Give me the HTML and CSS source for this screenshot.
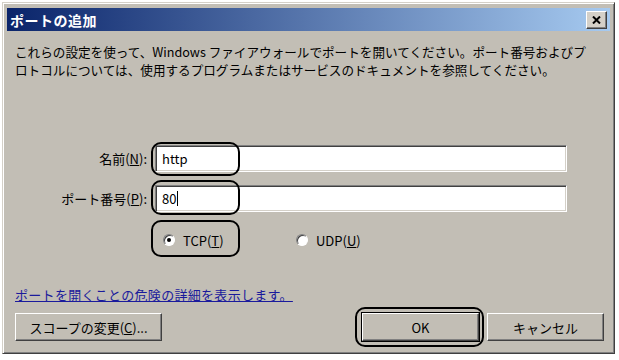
FILE: index.html
```html
<!DOCTYPE html>
<html lang="ja">
<head>
    <meta charset="UTF-8">
    <title>ポートの追加</title>
    <link rel="stylesheet" href="styles.css">
</head>
<body>
    <div class="window">
        <div class="titlebar">
            <span class="title">ポートの追加</span>
            <span class="close">
                <svg width="9" height="8" viewBox="0 0 9 8"><path d="M1 0.5 L8 7.5 M8 0.5 L1 7.5" stroke="#000" stroke-width="2"/></svg>
            </span>
        </div>

        <div class="content">
            <p class="intro">これらの設定を使って、Windows ファイアウォールでポートを開いてください。ポート番号およびプ<br>ロトコルについては、使用するプログラムまたはサービスのドキュメントを参照してください。</p>

            <div class="field first">
                <label>名前(<u>N</u>):</label>
                <div class="input">http</div>
                <span class="mark"></span>
            </div>
            <div class="field second">
                <label>ポート番号(<u>P</u>):</label>
                <div class="input">80<span class="caret"></span></div>
                <span class="mark"></span>
            </div>

            <div class="radios">
                <span class="radio-item tcp"><span class="radio checked"></span><span>TCP(<u>T</u>)</span></span>
                <span class="radio-item"><span class="radio"></span><span>UDP(<u>U</u>)</span></span>
                <span class="mark"></span>
            </div>

            <a class="link" href="#">ポートを開くことの危険の詳細を表示します。</a>

            <div class="buttons">
                <span class="btn scope"><span>スコープの変更(<u>C</u>)...</span></span>
                <span class="spacer"></span>
                <span class="btn ok">OK<span class="mark"></span></span>
                <span class="btn">キャンセル</span>
            </div>
        </div>
    </div>
</body>
</html>
```

FILE: styles.css
```css
body {
    margin: 0;
    background: #fff;
    font-family: "Noto Sans CJK JP", "DejaVu Sans", sans-serif;
    font-size: 13px;
    color: #000;
}
.window {
    margin: 2px;
    width: 613px;
    height: 352px;
    box-sizing: border-box;
    background: #c2beb5;
    border: 1px solid;
    border-color: #d4d0c8 #404040 #404040 #d4d0c8;
    box-shadow: inset 1px 1px #fff, inset -1px -1px #808080;
    padding: 5px 4px 4px 4px;
}
.titlebar {
    height: 23px;
    display: flex;
    align-items: center;
    justify-content: space-between;
    background: linear-gradient(to right, #0a246a, #a6caf0);
    padding: 0 3px;
}
.title {
    color: #fff;
    font-weight: bold;
    font-size: 14px;
    letter-spacing: 0.5px;
}
.close {
    width: 21px;
    height: 18px;
    box-sizing: border-box;
    background: #d4d0c8;
    border: 1px solid;
    border-color: #fff #404040 #404040 #fff;
    box-shadow: inset -1px -1px #808080;
    display: flex;
    align-items: center;
    justify-content: center;
}
.content {
    padding: 0 6px 0 8px;
}
.intro {
    margin: 12px 0 0 0;
    line-height: 18px;
    white-space: nowrap;
    font-size: 12.6px;
}
.field {
    position: relative;
    display: flex;
    align-items: center;
    gap: 8px;
    height: 27px;
}
.field.first {
    margin-top: 66px;
}
.field.second {
    margin-top: 13px;
}
.field label {
    width: 132px;
    text-align: right;
}
.input {
    width: 412px;
    height: 27px;
    box-sizing: border-box;
    background: #fff;
    border: 1px solid;
    border-color: #808080 #fff #fff #808080;
    box-shadow: inset 1px 1px #404040, inset -1px -1px #d4d0c8;
    padding: 3px 6px;
    line-height: 19px;
}
.caret {
    display: inline-block;
    width: 1px;
    height: 15px;
    background: #000;
    vertical-align: -2px;
    margin-left: 1px;
}
.mark {
    position: absolute;
    left: 136px;
    top: -3px;
    width: 89px;
    height: 34px;
    box-sizing: border-box;
    border: 2px solid #000;
    border-radius: 10px;
}
.field.second .mark {
    top: -5px;
    height: 35px;
}
.radios {
    position: relative;
    display: flex;
    align-items: center;
    height: 20px;
    margin-top: 18px;
    padding-left: 148px;
}
.radios .mark {
    top: -10px;
    height: 37px;
}
.radio-item {
    display: flex;
    align-items: center;
    gap: 8px;
}
.radio-item.tcp {
    width: 133px;
}
.radio {
    width: 12px;
    height: 12px;
    box-sizing: border-box;
    border-radius: 50%;
    background: #fff;
    border: 1px solid;
    border-color: #808080 #fff #fff #808080;
    box-shadow: inset 1px 1px #404040;
    position: relative;
}
.radio.checked::after {
    content: "";
    position: absolute;
    left: 3px;
    top: 3px;
    width: 4px;
    height: 4px;
    border-radius: 50%;
    background: #000;
}
.link {
    display: block;
    margin-top: 36px;
    line-height: 18px;
    color: #1a1a9c;
    width: max-content;
    letter-spacing: 0.3px;
}
.buttons {
    display: flex;
    margin-top: 9px;
    gap: 8px;
}
.spacer {
    flex: 1;
}
.btn {
    position: relative;
    width: 117px;
    height: 28px;
    box-sizing: border-box;
    display: flex;
    align-items: center;
    justify-content: center;
    background: #c2beb5;
    border: 1px solid;
    border-color: #fff #404040 #404040 #fff;
    box-shadow: inset -1px -1px #808080;
}
.btn.scope {
    width: 147px;
}
.btn.ok {
    outline: 1px solid #000;
}
.btn .mark {
    left: -8px;
    top: -7px;
    width: 129px;
    height: 40px;
}
```
